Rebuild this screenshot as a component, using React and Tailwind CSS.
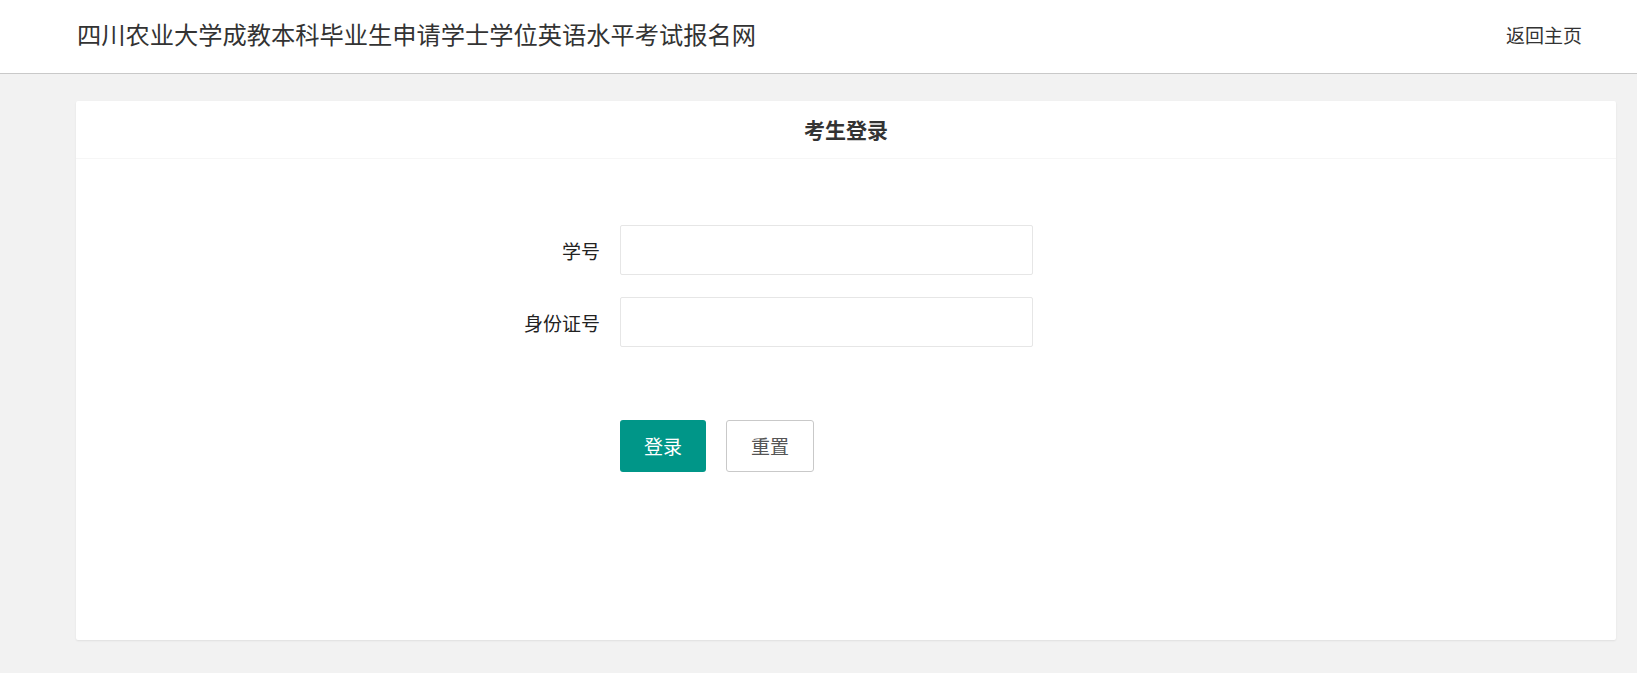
export default function App() {
  const font = { fontFamily: '"Noto Sans CJK SC", "Noto Sans", sans-serif' };

  return (
    <div className="min-h-[673px] bg-[#f2f2f2] text-[#333]" style={font}>
      <header className="h-[74px] bg-white border-b border-[#c9c9c9] flex items-center justify-between pl-[77px] pr-[55px]">
        <h1 className="text-[24.25px] leading-none font-normal text-[#333] -mt-[4px]">
          四川农业大学成教本科毕业生申请学士学位英语水平考试报名网
        </h1>
        <a href="#" className="text-[19px] leading-none text-[#333] -mt-[5px]">
          返回主页
        </a>
      </header>

      <main className="pt-[27px] pb-[33px]">
        <div className="ml-[76px] w-[1540px] bg-white rounded-[2px] shadow-[0_1px_2px_0_rgba(0,0,0,0.08)]">
          <div className="h-[58px] border-b border-[#f6f6f6] flex items-center justify-center">
            <span className="text-[21px] font-bold text-[#333] leading-none">考生登录</span>
          </div>

          <form className="pt-[66px] pb-[168px]" onSubmit={e => e.preventDefault()}>
            <div className="flex flex-col gap-[22px] pl-[410px]">
              <div className="flex items-center gap-[20px]">
                <label className="w-[114px] text-right text-[19px] text-[#222] leading-none">学号</label>
                <input
                  type="text"
                  className="w-[413px] h-[50px] border border-[#e6e6e6] rounded-[2px] px-3 text-[17px] outline-none"
                />
              </div>
              <div className="flex items-center gap-[20px]">
                <label className="w-[114px] text-right text-[19px] text-[#222] leading-none">身份证号</label>
                <input
                  type="text"
                  className="w-[413px] h-[50px] border border-[#e6e6e6] rounded-[2px] px-3 text-[17px] outline-none"
                />
              </div>
            </div>

            <div className="flex gap-[20px] pl-[544px] mt-[73px]">
              <button
                type="submit"
                className="w-[86px] h-[52px] bg-[#009688] text-white text-[19px] rounded-[3px]"
              >
                登录
              </button>
              <button
                type="reset"
                className="w-[88px] h-[52px] bg-white border border-[#c9c9c9] text-[#555] text-[19px] rounded-[3px]"
              >
                重置
              </button>
            </div>
          </form>
        </div>
      </main>
    </div>
  );
}
